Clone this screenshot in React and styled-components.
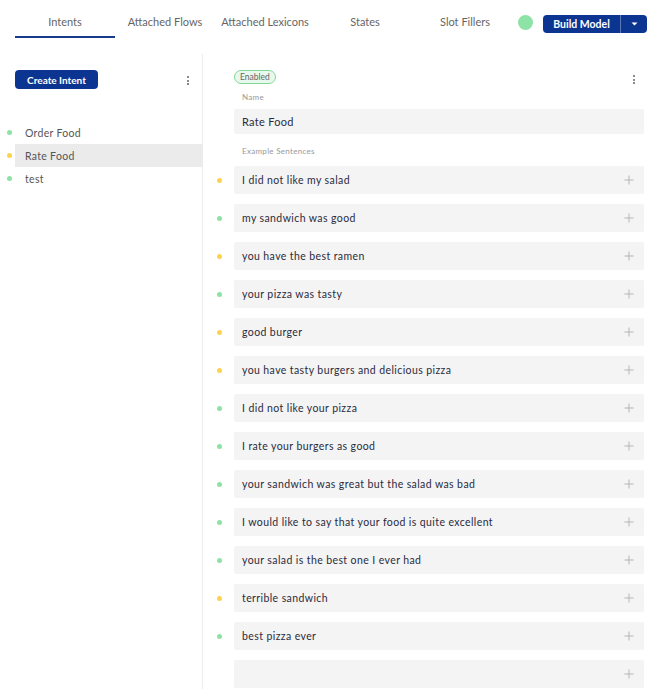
import React from "react";
import styled, { createGlobalStyle } from "styled-components";

const Global = createGlobalStyle`
  html, body { margin: 0; padding: 0; background: #fff; }
  body { font-family: "Lato", "Noto Sans", sans-serif; color: #2b2b3c; letter-spacing: 0.3px; }
  * { box-sizing: border-box; }
`;

const Page = styled.div`
  width: 655px;
  height: 689px;
  overflow: hidden;
  display: flex;
  flex-direction: column;
`;

const TopBar = styled.div`
  display: flex;
  align-items: flex-start;
  padding: 0 8px 0 15px;
  height: 54px;
`;

const Tabs = styled.div`
  display: flex;
`;

const Tab = styled.div`
  width: 100px;
  height: 38px;
  padding-top: 15px;
  text-align: center;
  font-size: 11px;
  letter-spacing: 0;
  color: #666;
  border-bottom: 2px solid ${(p) => (p.$active ? "#183a8c" : "transparent")};
`;

const Status = styled.div`
  width: 15px;
  height: 15px;
  border-radius: 50%;
  background: #8de2a5;
  margin: 15px 10px 0 3px;
`;

const SplitButton = styled.div`
  display: flex;
  margin-top: 15px;
  height: 18px;
  border-radius: 4px;
  overflow: hidden;
  background: #0c3592;
`;

const SplitMain = styled.div`
  width: 77px;
  display: flex;
  align-items: center;
  justify-content: center;
  color: #fff;
  font-size: 10.5px;
  font-weight: 700;
  letter-spacing: 0;
`;

const SplitCaret = styled.div`
  width: 27px;
  border-left: 1px solid #5a77b8;
  display: flex;
  align-items: center;
  justify-content: center;
`;

const Body = styled.div`
  flex: 1;
  display: flex;
`;

const Sidebar = styled.div`
  width: 203px;
  border-right: 1px solid #ececec;
  display: flex;
  flex-direction: column;
`;

const SideHead = styled.div`
  display: flex;
  align-items: center;
  justify-content: space-between;
  padding: 16px 10px 0 15px;
`;

const PrimaryButton = styled.div`
  width: 83px;
  height: 19px;
  border-radius: 4px;
  background: #0c3592;
  color: #fff;
  font-size: 10px;
  font-weight: 700;
  letter-spacing: 0;
  display: flex;
  align-items: center;
  justify-content: center;
`;

const IntentList = styled.div`
  margin-top: 32px;
  display: flex;
  flex-direction: column;
`;

const IntentItem = styled.div`
  display: flex;
  align-items: center;
  height: 23px;
`;

const Dot = styled.span`
  width: 5px;
  height: 5px;
  border-radius: 50%;
  background: ${(p) => (p.$tone === "yellow" ? "#fcd34d" : "#8de2a5")};
  flex: none;
`;

const DotSlot = styled.div`
  width: 15px;
  display: flex;
  align-items: center;
  padding-left: 7px;
  align-self: stretch;
`;

const IntentLabel = styled.div`
  flex: 1;
  align-self: stretch;
  display: flex;
  align-items: center;
  padding-left: 10px;
  font-size: 10.5px;
  color: #555;
  background: ${(p) => (p.$selected ? "#ebebeb" : "transparent")};
`;

const Main = styled.div`
  flex: 1;
  padding: 15px 11px 0 12px;
  display: flex;
  flex-direction: column;
`;

const MainHead = styled.div`
  display: flex;
  align-items: flex-start;
  justify-content: space-between;
  padding-left: 19px;
  height: 23px;
`;

const Badge = styled.div`
  height: 14px;
  padding: 0 5px;
  border: 1px solid #7fd89a;
  background: #e8f8ec;
  border-radius: 8px;
  font-size: 8.5px;
  letter-spacing: 0;
  color: #666;
  display: flex;
  align-items: center;
  margin-top: 1px;
`;

const Kebab = styled.div`
  display: flex;
  flex-direction: column;
  gap: 1.5px;
  margin-top: ${(p) => p.$top || 0}px;
  margin-right: ${(p) => p.$right || 0}px;
  span {
    width: 2px;
    height: 2px;
    border-radius: 50%;
    background: #666;
  }
`;

const FieldLabel = styled.div`
  font-size: 8px;
  color: #999;
  padding-left: 27px;
  height: ${(p) => p.$h}px;
`;

const Field = styled.div`
  margin-left: 19px;
  height: 25px;
  background: #f4f4f4;
  border-radius: 2px;
  display: flex;
  align-items: center;
  padding-left: 8px;
  font-size: 11px;
  color: #2b2b3c;
  margin-bottom: 12px;
`;

const Sentences = styled.div`
  display: flex;
  flex-direction: column;
  gap: 10px;
`;

const Sentence = styled.div`
  display: flex;
  align-items: center;
`;

const SentenceDot = styled.div`
  width: 19px;
  display: flex;
  padding-left: 2px;
`;

const SentenceBox = styled.div`
  flex: 1;
  height: 28px;
  background: #f4f4f4;
  border-radius: 2px;
  display: flex;
  align-items: center;
  justify-content: space-between;
  padding: 0 10px 0 8px;
  font-size: 10.5px;
  letter-spacing: 0.4px;
  color: #2b2b3c;
`;

const Plus = () => (
  <svg width="10" height="10" viewBox="0 0 10 10">
    <path d="M5 0.5V9.5M0.5 5H9.5" stroke="#b5b5b5" strokeWidth="1" />
  </svg>
);

const Caret = () => (
  <svg width="7" height="4" viewBox="0 0 7 4">
    <path d="M0.5 0.5H6.5L3.5 3.5Z" fill="#fff" />
  </svg>
);

const tabs = ["Intents", "Attached Flows", "Attached Lexicons", "States", "Slot Fillers"];
const intents = [
  { name: "Order Food", tone: "green" },
  { name: "Rate Food", tone: "yellow", selected: true },
  { name: "test", tone: "green" },
];
const sentences = [
  ["I did not like my salad", "yellow"],
  ["my sandwich was good", "green"],
  ["you have the best ramen", "yellow"],
  ["your pizza was tasty", "green"],
  ["good burger", "yellow"],
  ["you have tasty burgers and delicious pizza", "yellow"],
  ["I did not like your pizza", "green"],
  ["I rate your burgers as good", "green"],
  ["your sandwich was great but the salad was bad", "green"],
  ["I would like to say that your food is quite excellent", "green"],
  ["your salad is the best one I ever had", "green"],
  ["terrible sandwich", "yellow"],
  ["best pizza ever", "green"],
  ["", null],
];

export default function App() {
  return (
    <Page>
      <Global />
      <TopBar>
        <Tabs>
          {tabs.map((t, i) => (
            <Tab key={t} $active={i === 0}>
              {t}
            </Tab>
          ))}
        </Tabs>
        <Status />
        <SplitButton>
          <SplitMain>Build Model</SplitMain>
          <SplitCaret>
            <Caret />
          </SplitCaret>
        </SplitButton>
      </TopBar>
      <Body>
        <Sidebar>
          <SideHead>
            <PrimaryButton>Create Intent</PrimaryButton>
            <Kebab $top={2} $right={3}>
              <span />
              <span />
              <span />
            </Kebab>
          </SideHead>
          <IntentList>
            {intents.map((it) => (
              <IntentItem key={it.name}>
                <DotSlot>
                  <Dot $tone={it.tone} />
                </DotSlot>
                <IntentLabel $selected={it.selected}>{it.name}</IntentLabel>
              </IntentItem>
            ))}
          </IntentList>
        </Sidebar>
        <Main>
          <MainHead>
            <Badge>Enabled</Badge>
            <Kebab $top={6} $right={9}>
              <span />
              <span />
              <span />
            </Kebab>
          </MainHead>
          <FieldLabel $h={17}>Name</FieldLabel>
          <Field>Rate Food</Field>
          <FieldLabel $h={20}>Example Sentences</FieldLabel>
          <Sentences>
            {sentences.map(([s, tone], i) => (
              <Sentence key={i}>
                <SentenceDot>{tone && <Dot $tone={tone} />}</SentenceDot>
                <SentenceBox>
                  <span>{s}</span>
                  <Plus />
                </SentenceBox>
              </Sentence>
            ))}
          </Sentences>
        </Main>
      </Body>
    </Page>
  );
}
